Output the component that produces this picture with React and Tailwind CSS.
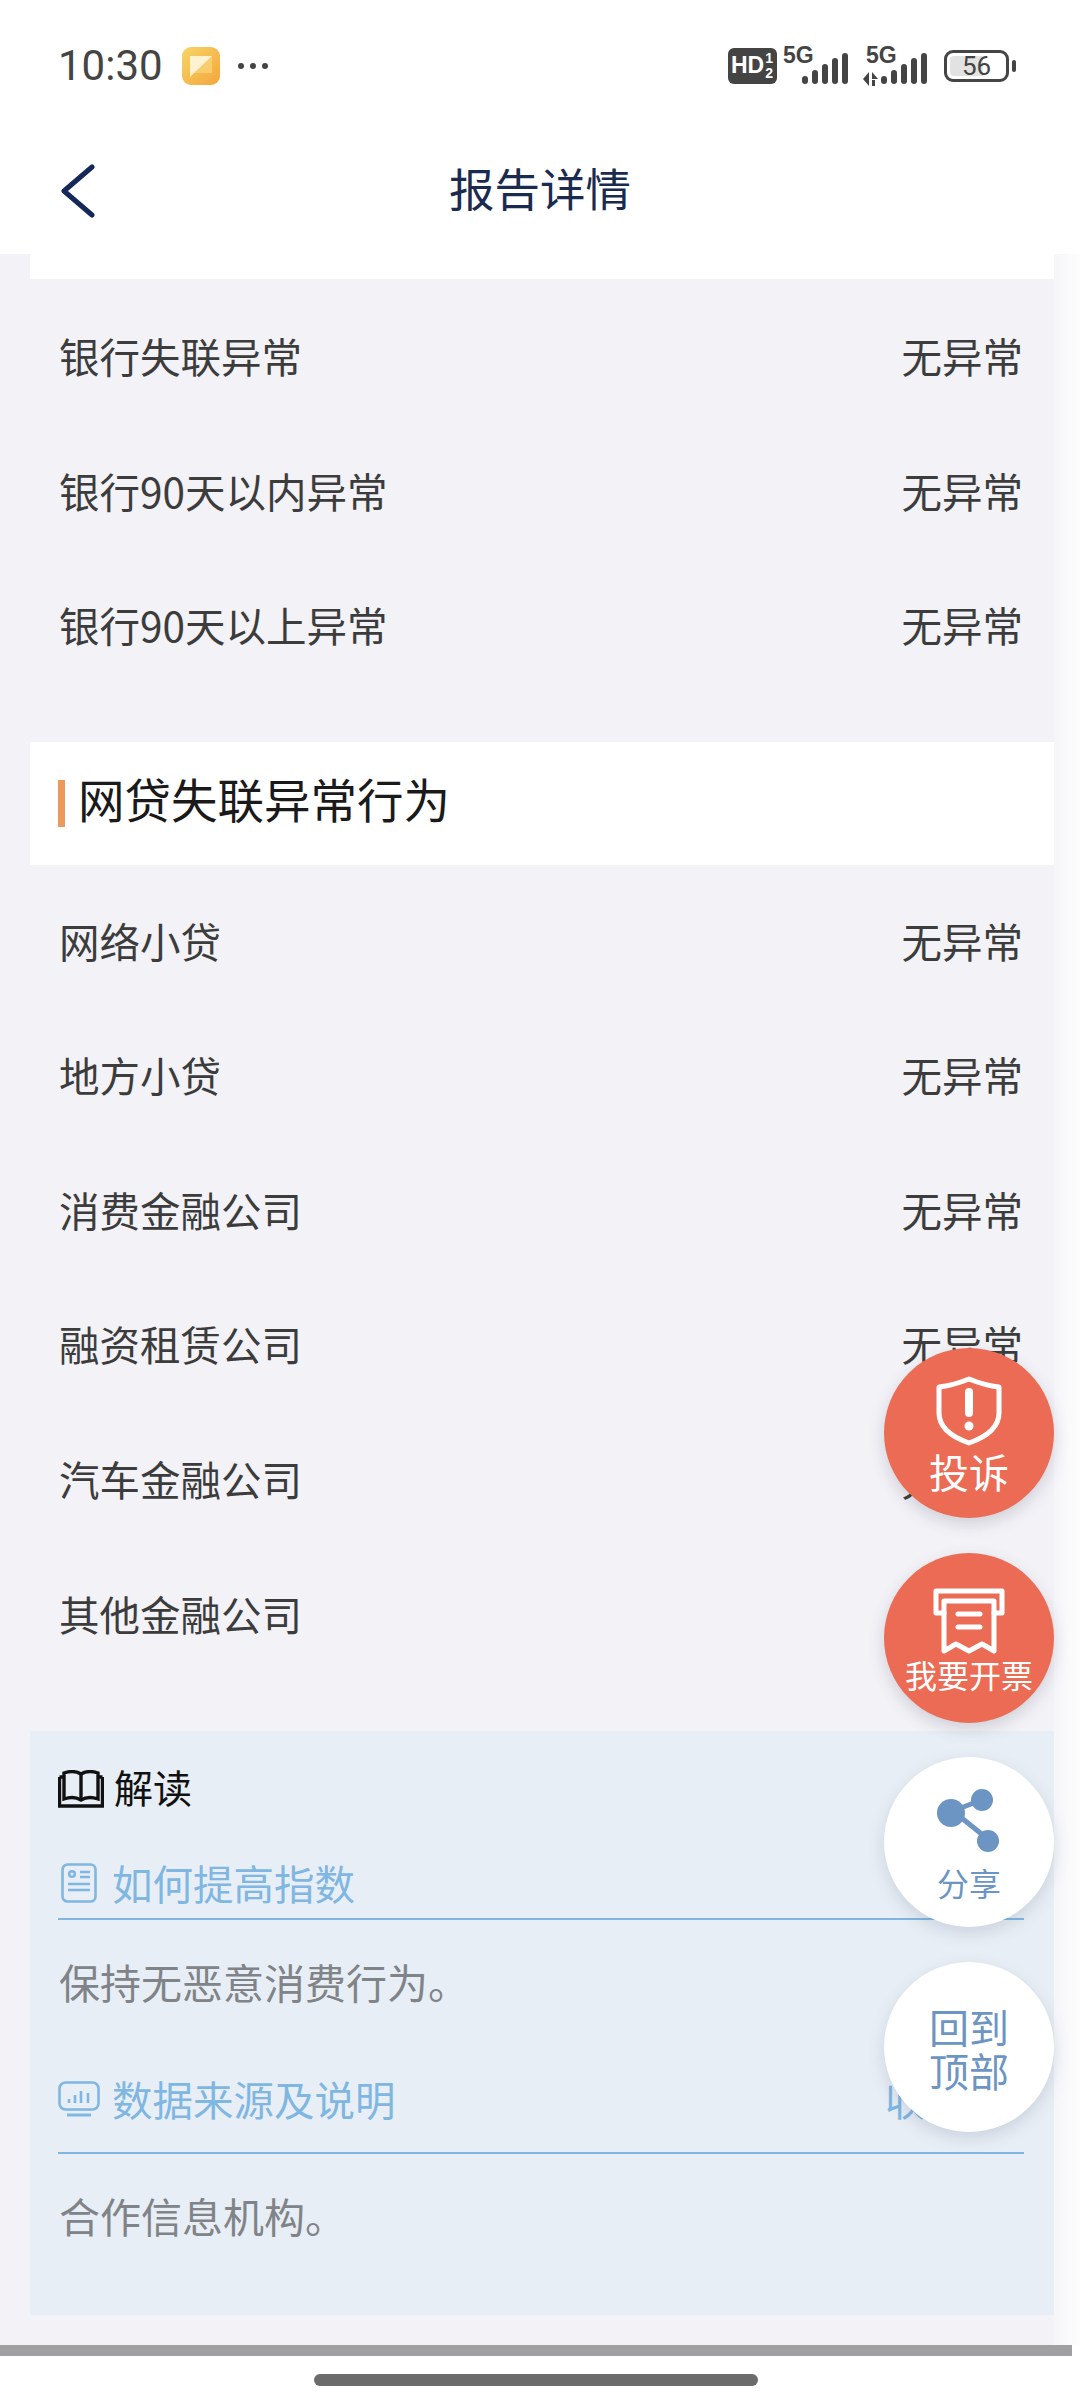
const font = { fontFamily: '"Noto Sans CJK SC", "Noto Sans", sans-serif' };

function Bars() {
  const hs = [8, 14, 20, 26, 31];
  return (
    <svg width="48" height="32" viewBox="0 0 48 32" fill="#444">
      {hs.map((h, i) => (
        <rect key={i} x={i * 10 + 1} y={32 - h} width="6" height={h} rx="3" />
      ))}
    </svg>
  );
}

function StatusBar() {
  return (
    <div className="h-[130px] bg-white flex items-center justify-between pl-[58px] pr-[64px] pt-[1px]">
      <div className="flex items-center">
        <span className="text-[42px] leading-[42px] text-[#444] w-[124px]" style={{ fontFamily: 'Roboto, sans-serif' }}>10:30</span>
        <svg width="38" height="38" viewBox="0 0 38 38">
          <defs>
            <linearGradient id="ng" x1="0" y1="0" x2="1" y2="1">
              <stop offset="0" stopColor="#f8d466" />
              <stop offset="1" stopColor="#f3a63c" />
            </linearGradient>
          </defs>
          <rect width="38" height="38" rx="9" fill="url(#ng)" />
          <path d="M8 9h22v15a2 2 0 0 1-2 2H12l-4 4z" fill="#fdf3d0" />
          <path d="M30 9v15a2 2 0 0 1-2 2H12z" fill="#f8cd6e" />
        </svg>
        <div className="flex gap-[6px] ml-[18px]">
          <span className="w-[6px] h-[6px] rounded-full bg-[#444]" />
          <span className="w-[6px] h-[6px] rounded-full bg-[#444]" />
          <span className="w-[6px] h-[6px] rounded-full bg-[#444]" />
        </div>
      </div>
      <div className="flex items-center">
        <div className="w-[49px] h-[36px] rounded-[6px] bg-[#444] text-white flex items-center pl-[3px] font-bold" style={{ fontFamily: '"Liberation Sans", sans-serif' }}>
          <span className="text-[23px] leading-none">HD</span>
          <span className="flex flex-col text-[14px] leading-[15px] items-center ml-[1px]"><span>1</span><span>2</span></span>
        </div>
        <div className="relative w-[72px] h-[36px] ml-[5px]">
          <span className="absolute left-[1px] top-[-4px] text-[23px] leading-[23px] font-bold text-[#444]" style={{ fontFamily: '"Liberation Sans", sans-serif' }}>5G</span>
          <div className="absolute left-[19px] top-[4px]"><Bars /></div>
        </div>
        <div className="relative w-[72px] h-[36px] ml-[6px]">
          <span className="absolute left-[6px] top-[-4px] text-[23px] leading-[23px] font-bold text-[#444]" style={{ fontFamily: '"Liberation Sans", sans-serif' }}>5G</span>
          <svg className="absolute left-[3px] top-[24px]" width="16" height="14" viewBox="0 0 16 14" fill="#444">
            <path d="M6 0v14L0 7zM9 0l6 7H9zM9 8h3v6H9z" />
          </svg>
          <div className="absolute left-[20px] top-[4px]"><Bars /></div>
        </div>
        <div className="relative w-[65px] h-[32px] ml-[12px] rounded-[9px] border-[3px] border-[#444] flex items-center justify-center p-[3px]">
          <div className="absolute left-[3px] top-[3px] bottom-[3px] w-[33px] bg-[#e2e2e2] rounded-l-[4px]" />
          <span className="relative text-[26px] leading-none text-[#444]" style={{ fontFamily: 'Roboto, sans-serif' }}>56</span>
        </div>
        <div className="w-[4px] h-[12px] bg-[#444] rounded-full ml-[3px]" />
      </div>
    </div>
  );
}

function Nav() {
  return (
    <div className="relative h-[124px] bg-white flex items-center justify-center">
      <svg className="absolute left-[59px] top-[34px]" width="38" height="54" viewBox="0 0 38 54" fill="none" stroke="#14295a" strokeWidth="5" strokeLinecap="round" strokeLinejoin="round">
        <path d="M33 3 5 27l28 24" />
      </svg>
      <span className="text-[45.5px] leading-none text-[#1b2b4f] mt-[-9px]">报告详情</span>
    </div>
  );
}

function Row({ label }) {
  return (
    <div className="h-[134.6px] flex items-center justify-between pl-[59px] pr-[57px] pb-[4px] text-[40.5px] text-[#3c3c3c]">
      <span>{label}</span>
      <span>无异常</span>
    </div>
  );
}

function BookIcon() {
  return (
    <svg width="46" height="38" viewBox="0 0 46 38" fill="none" stroke="#111" strokeWidth="3.4">
      <path d="M1.5 7h4M40.5 7h4M1.5 7v29h43V7" />
      <path d="M6 3c6-2 12-2 17 1 5-3 11-3 17-1v26c-6-2-12-2-17 1-5-3-11-3-17-1z" />
      <path d="M23 4v26" />
    </svg>
  );
}

function DocIcon() {
  return (
    <svg width="36" height="40" viewBox="0 0 36 40" fill="none" stroke="#7fb6e2" strokeWidth="2.6">
      <rect x="1.5" y="1.5" width="33" height="37" rx="5" />
      <circle cx="11" cy="11" r="2.8" />
      <path d="M19 9h10M19 14h10M7 21h22M7 27h22" />
    </svg>
  );
}

function ChartIcon() {
  return (
    <svg width="42" height="36" viewBox="0 0 42 36" fill="none" stroke="#7fb6e2" strokeWidth="2.6">
      <rect x="1.5" y="1.5" width="39" height="27" rx="6" />
      <path d="M9 34h24" strokeWidth="3" />
      <path d="M11 18v4M17 14v8M23 10v12M30 12v10" />
    </svg>
  );
}

function Panel() {
  return (
    <div className="mx-[30px] mt-[48px] h-[584px] w-[1024px] bg-[#e8eef5] pl-[28px] pr-[30px] pt-[40px]">
      <div className="flex items-center h-[36px]">
        <BookIcon />
        <span className="ml-[10px] mt-[-6px] text-[39px] leading-none text-[#111]">解读</span>
      </div>
      <div className="flex items-center h-[72px] mt-[41px] border-b-[2px] border-[#7fb6e2]">
        <div className="w-[54px] pl-[3px] flex"><DocIcon /></div>
        <span className="text-[40.5px] leading-none text-[#7fb6e2]">如何提高指数</span>
      </div>
      <div className="h-[155px] pt-[41px] pl-[1px] text-[41px] leading-none text-[#808488]">保持无恶意消费行为。</div>
      <div className="flex items-center justify-between h-[79px] border-b-[2px] border-[#7fb6e2] pb-[30px]">
        <div className="flex items-center">
          <div className="w-[54px] flex"><ChartIcon /></div>
          <span className="text-[40.5px] leading-none text-[#7fb6e2]">数据来源及说明</span>
        </div>
        <span className="text-[40.5px] leading-none text-[#7fb6e2] w-[139px]">收起</span>
      </div>
      <div className="pt-[41px] pl-[1px] text-[41px] leading-none text-[#808488]">合作信息机构。</div>
    </div>
  );
}

function Float({ top, white, children }) {
  return (
    <div
      className={`absolute left-[884px] w-[170px] h-[170px] rounded-full flex flex-col items-center ${white ? 'bg-white shadow-[0_6px_16px_rgba(70,90,120,0.18)]' : 'bg-[#ec6b54] shadow-[0_6px_16px_rgba(70,70,90,0.2)]'}`}
      style={{ top }}
    >
      {children}
    </div>
  );
}

function Floats() {
  return (
    <>
      <Float top={1348}>
        <svg className="mt-[27px]" width="66" height="72" viewBox="0 0 66 72" fill="none" stroke="#fff" strokeWidth="5" strokeLinejoin="round">
          <path d="M3 12c10-1 20-4 30-8 10 4 20 7 30 8v26c0 14-13 24-30 30C16 62 3 52 3 38z" />
          <path d="M33 17v21" strokeWidth="8" strokeLinecap="round" />
          <circle cx="33" cy="51" r="4.5" fill="#fff" stroke="none" />
        </svg>
        <span className="text-[40px] leading-none text-white mt-[4px]">投诉</span>
      </Float>
      <Float top={1553}>
        <svg className="mt-[35px]" width="72" height="66" viewBox="0 0 72 66" fill="none" stroke="#fff" strokeWidth="5" strokeLinejoin="round" strokeLinecap="round">
          <path d="M11 25H3V3h66v22h-8" />
          <path d="M11 13h50v50l-12-7-13 7-13-7-12 7z" />
          <path d="M25 26h22M25 39h22" />
        </svg>
        <span className="text-[32px] leading-none text-white mt-[4px] whitespace-nowrap">我要开票</span>
      </Float>
      <Float top={1757} white>
        <svg className="mt-[30px]" width="66" height="68" viewBox="0 0 66 68" fill="#6d95c3" stroke="none">
          <path d="M17 24 48 12M17 24l36 29" stroke="#6d95c3" strokeWidth="5" />
          <circle cx="15" cy="26" r="14" />
          <circle cx="46" cy="13" r="11" />
          <circle cx="52" cy="54" r="11" />
        </svg>
        <span className="text-[32px] leading-none text-[#6d95c3] mt-[11px]">分享</span>
      </Float>
      <Float top={1962} white>
        <span className="text-[40px] leading-[44px] text-[#6d95c3] mt-[42px] text-center">回到<br />顶部</span>
      </Float>
    </>
  );
}

export default function App() {
  return (
    <div className="relative w-[1080px] h-[2403px] overflow-hidden flex flex-col bg-white" style={font}>
      <StatusBar />
      <Nav />
      <div className="relative h-[2091px] bg-[#f2f2f7]">
        <div className="absolute right-0 top-0 bottom-0 w-[26px] bg-gradient-to-r from-[#f6f6fa] to-[#fdfdfe]" />
        <div className="relative">
          <div className="mx-[30px] w-[1024px] h-[25px] bg-white" />
          <div className="h-[12px]" />
          <Row label="银行失联异常" />
          <Row label="银行90天以内异常" />
          <Row label="银行90天以上异常" />
          <div className="mx-[30px] mt-[47px] w-[1024px] h-[123px] bg-white flex items-center pl-[28px]">
            <div className="w-[7px] h-[47px] bg-[#eb9a5c]" />
            <span className="ml-[13px] mt-[-10px] text-[46.5px] leading-none text-[#1a1a1a]">网贷失联异常行为</span>
          </div>
          <div className="h-[11px]" />
          <Row label="网络小贷" />
          <Row label="地方小贷" />
          <Row label="消费金融公司" />
          <Row label="融资租赁公司" />
          <Row label="汽车金融公司" />
          <Row label="其他金融公司" />
          <Panel />
        </div>
      </div>
      <div className="h-[11px] w-[1072px] bg-[#a09fa2] shrink-0" />
      <div className="flex-1 bg-white flex justify-center pt-[18px] pr-[8px]">
        <div className="w-[444px] h-[12px] rounded-full bg-[#6b6b6b]" />
      </div>
      <Floats />
    </div>
  );
}
